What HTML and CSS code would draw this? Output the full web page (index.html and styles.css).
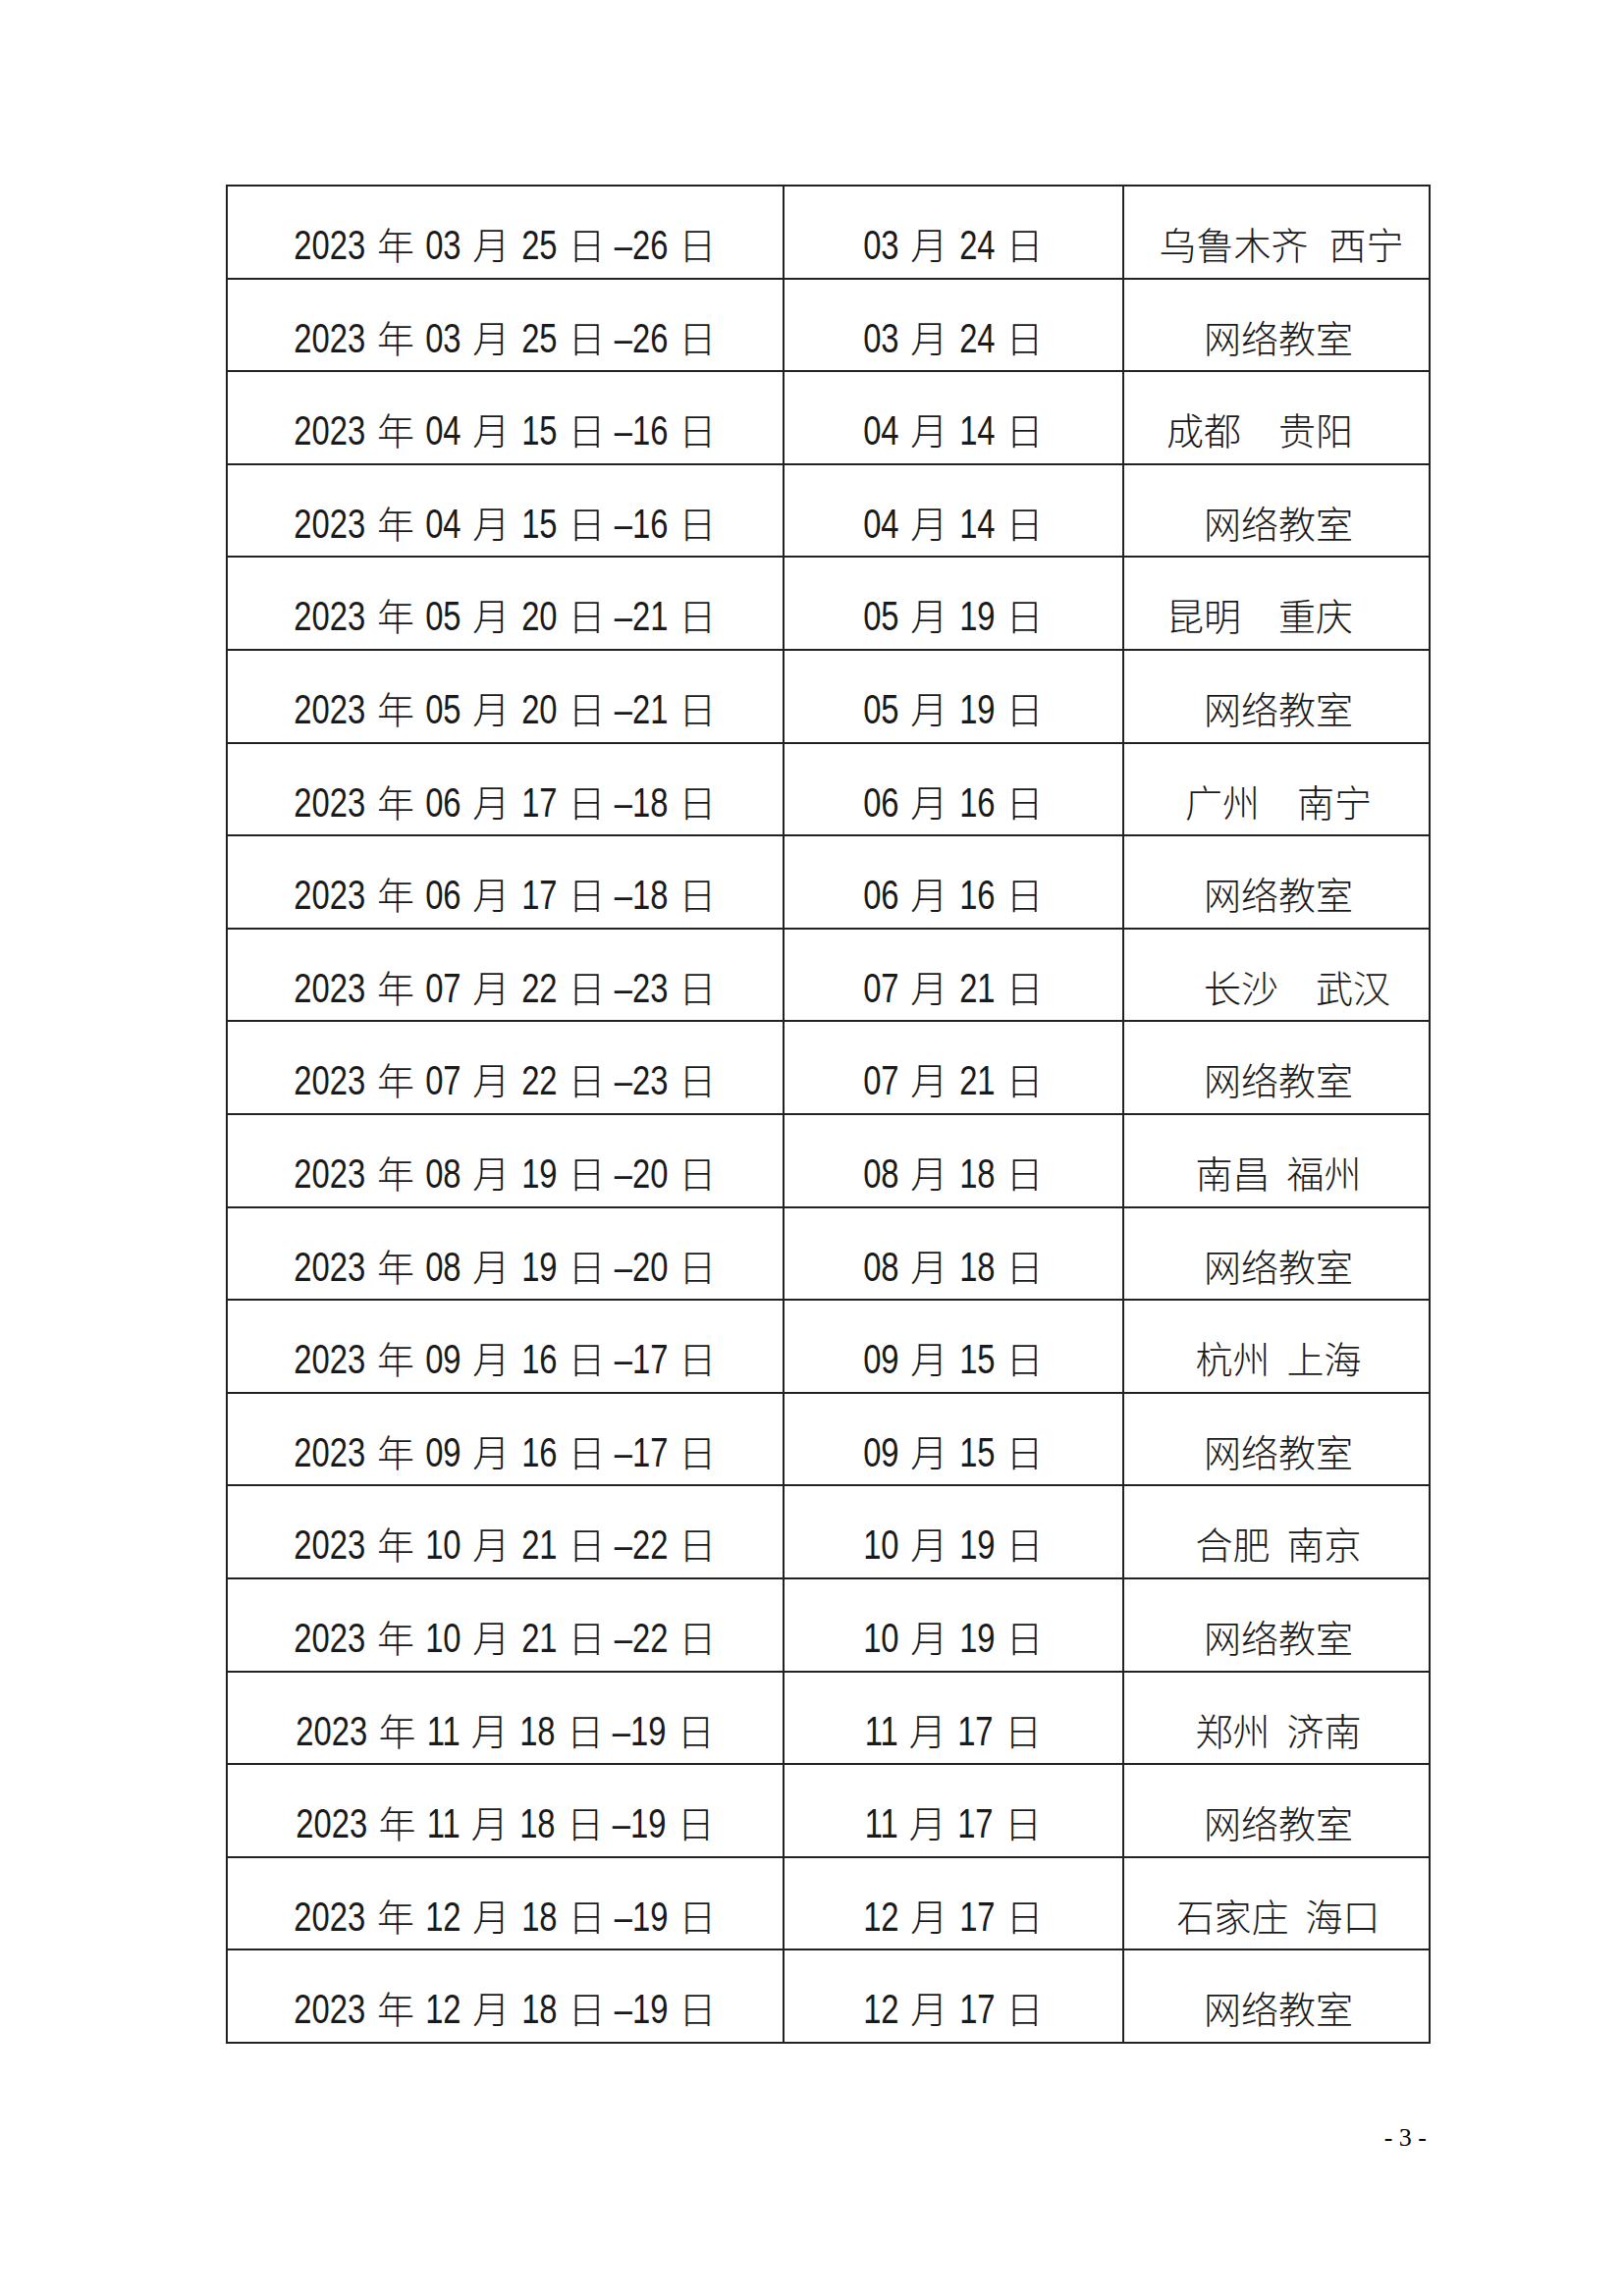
FILE: index.html
```html
<!DOCTYPE html>
<html lang="zh-CN">
<head>
<meta charset="utf-8">
<title>2023 日程</title>
<link rel="stylesheet" href="styles.css">
</head>
<body>
<div class="page">
<table class="sched">
<colgroup><col class="c1"><col class="c2"><col class="c3"></colgroup>
<tbody>
<tr><td><span class="n n4">2023</span> 年 <span class="n">03</span> 月 <span class="n">25</span> 日<span class="n n3">–26</span> 日</td><td><span class="n">03</span> 月 <span class="n">24</span> 日</td><td class="loc wide">乌鲁木齐  西宁</td></tr>
<tr><td><span class="n n4">2023</span> 年 <span class="n">03</span> 月 <span class="n">25</span> 日<span class="n n3">–26</span> 日</td><td><span class="n">03</span> 月 <span class="n">24</span> 日</td><td class="loc">网络教室</td></tr>
<tr><td><span class="n n4">2023</span> 年 <span class="n">04</span> 月 <span class="n">15</span> 日<span class="n n3">–16</span> 日</td><td><span class="n">04</span> 月 <span class="n">14</span> 日</td><td class="loc">成都　贵阳　</td></tr>
<tr><td><span class="n n4">2023</span> 年 <span class="n">04</span> 月 <span class="n">15</span> 日<span class="n n3">–16</span> 日</td><td><span class="n">04</span> 月 <span class="n">14</span> 日</td><td class="loc">网络教室</td></tr>
<tr><td><span class="n n4">2023</span> 年 <span class="n">05</span> 月 <span class="n">20</span> 日<span class="n n3">–21</span> 日</td><td><span class="n">05</span> 月 <span class="n">19</span> 日</td><td class="loc">昆明　重庆　</td></tr>
<tr><td><span class="n n4">2023</span> 年 <span class="n">05</span> 月 <span class="n">20</span> 日<span class="n n3">–21</span> 日</td><td><span class="n">05</span> 月 <span class="n">19</span> 日</td><td class="loc">网络教室</td></tr>
<tr><td><span class="n n4">2023</span> 年 <span class="n">06</span> 月 <span class="n">17</span> 日<span class="n n3">–18</span> 日</td><td><span class="n">06</span> 月 <span class="n">16</span> 日</td><td class="loc">广州　南宁</td></tr>
<tr><td><span class="n n4">2023</span> 年 <span class="n">06</span> 月 <span class="n">17</span> 日<span class="n n3">–18</span> 日</td><td><span class="n">06</span> 月 <span class="n">16</span> 日</td><td class="loc">网络教室</td></tr>
<tr><td><span class="n n4">2023</span> 年 <span class="n">07</span> 月 <span class="n">22</span> 日<span class="n n3">–23</span> 日</td><td><span class="n">07</span> 月 <span class="n">21</span> 日</td><td class="loc">　长沙　武汉</td></tr>
<tr><td><span class="n n4">2023</span> 年 <span class="n">07</span> 月 <span class="n">22</span> 日<span class="n n3">–23</span> 日</td><td><span class="n">07</span> 月 <span class="n">21</span> 日</td><td class="loc">网络教室</td></tr>
<tr><td><span class="n n4">2023</span> 年 <span class="n">08</span> 月 <span class="n">19</span> 日<span class="n n3">–20</span> 日</td><td><span class="n">08</span> 月 <span class="n">18</span> 日</td><td class="loc">南昌  福州</td></tr>
<tr><td><span class="n n4">2023</span> 年 <span class="n">08</span> 月 <span class="n">19</span> 日<span class="n n3">–20</span> 日</td><td><span class="n">08</span> 月 <span class="n">18</span> 日</td><td class="loc">网络教室</td></tr>
<tr><td><span class="n n4">2023</span> 年 <span class="n">09</span> 月 <span class="n">16</span> 日<span class="n n3">–17</span> 日</td><td><span class="n">09</span> 月 <span class="n">15</span> 日</td><td class="loc">杭州  上海</td></tr>
<tr><td><span class="n n4">2023</span> 年 <span class="n">09</span> 月 <span class="n">16</span> 日<span class="n n3">–17</span> 日</td><td><span class="n">09</span> 月 <span class="n">15</span> 日</td><td class="loc">网络教室</td></tr>
<tr><td><span class="n n4">2023</span> 年 <span class="n">10</span> 月 <span class="n">21</span> 日<span class="n n3">–22</span> 日</td><td><span class="n">10</span> 月 <span class="n">19</span> 日</td><td class="loc">合肥  南京</td></tr>
<tr><td><span class="n n4">2023</span> 年 <span class="n">10</span> 月 <span class="n">21</span> 日<span class="n n3">–22</span> 日</td><td><span class="n">10</span> 月 <span class="n">19</span> 日</td><td class="loc">网络教室</td></tr>
<tr><td><span class="n n4">2023</span> 年 <span class="n">11</span> 月 <span class="n">18</span> 日<span class="n n3">–19</span> 日</td><td><span class="n">11</span> 月 <span class="n">17</span> 日</td><td class="loc">郑州  济南</td></tr>
<tr><td><span class="n n4">2023</span> 年 <span class="n">11</span> 月 <span class="n">18</span> 日<span class="n n3">–19</span> 日</td><td><span class="n">11</span> 月 <span class="n">17</span> 日</td><td class="loc">网络教室</td></tr>
<tr><td><span class="n n4">2023</span> 年 <span class="n">12</span> 月 <span class="n">18</span> 日<span class="n n3">–19</span> 日</td><td><span class="n">12</span> 月 <span class="n">17</span> 日</td><td class="loc">石家庄  海口</td></tr>
<tr><td><span class="n n4">2023</span> 年 <span class="n">12</span> 月 <span class="n">18</span> 日<span class="n n3">–19</span> 日</td><td><span class="n">12</span> 月 <span class="n">17</span> 日</td><td class="loc">网络教室</td></tr>
</tbody>
</table>
<div class="pageno">- 3 -</div>
</div>
</body>
</html>
```

FILE: styles.css
```css
html, body {
  margin: 0;
  padding: 0;
  background: #fff;
}

.page {
  width: 1654px;
  padding: 188px 0 0 230px;
  box-sizing: border-box;
}

.sched {
  width: 1225px;
  table-layout: fixed;
  border-collapse: collapse;
  color: #1a1a1a;
  font-family: "Noto Sans CJK SC", sans-serif;
  font-weight: 300;
  font-size: 38px;
  line-height: 40px;
}

.c1 { width: 567px; }
.c2 { width: 346px; }
.c3 { width: 312px; }

.sched tr {
  height: 94.6px;
}

.sched td {
  border: 2px solid #222;
  padding: 38px 0 0 0;
  vertical-align: top;
  text-align: center;
  white-space: pre;
  word-spacing: 3px;
}

.sched td.loc {
  padding-left: 4px;
  word-spacing: 0;
}

.sched td.loc.wide {
  padding-left: 10px;
  word-spacing: 2px;
}

/* condensed digits: Liberation Sans squeezed horizontally */
.n {
  display: inline-block;
  font-family: "Liberation Sans", sans-serif;
  font-weight: 400;
  font-size: 42px;
  transform: scaleX(0.78);
  margin: 0 -5.1px;
}

.n4 {
  margin: 0 -10.3px;
}

.n3 {
  margin: 0 -7.7px 0 1px;
}

.pageno {
  width: 1225px;
  margin-top: 81px;
  text-align: right;
  padding-right: 2px;
  box-sizing: border-box;
  font-family: "Liberation Serif", serif;
  font-size: 26px;
  line-height: 30px;
  color: #000;
}
```
